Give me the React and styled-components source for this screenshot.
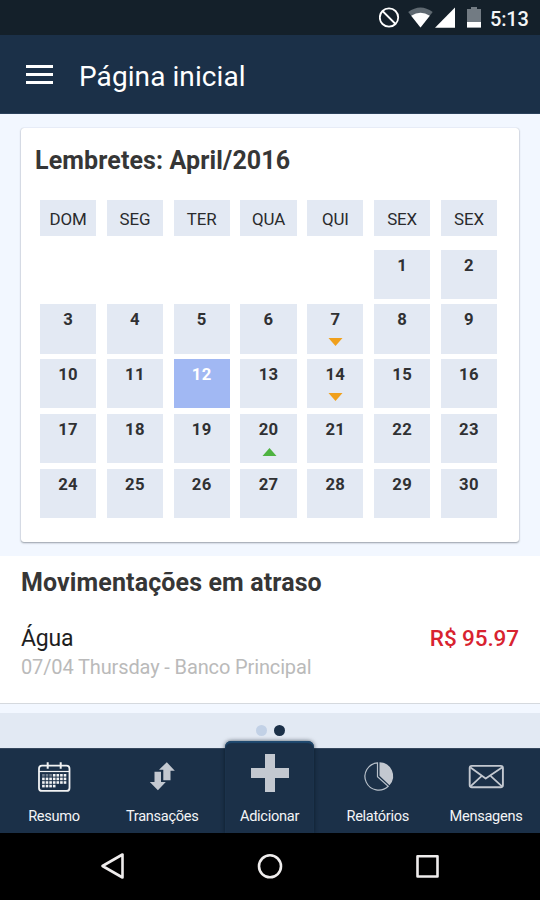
import React from "react";
import styled, { createGlobalStyle } from "styled-components";

const GlobalStyle = createGlobalStyle`
  *, *::before, *::after { box-sizing: border-box; }
  html, body { margin: 0; padding: 0; }
  body { font-family: Roboto, "Liberation Sans", sans-serif; overflow: hidden; }
  svg { display: block; }
`;

const Screen = styled.div`
  width: 540px;
  height: 900px;
  display: flex;
  flex-direction: column;
  overflow: hidden;
  background: #f2f7ff;
`;

const StatusBar = styled.header`
  height: 35px;
  flex: none;
  display: flex;
  align-items: center;
  justify-content: flex-end;
  padding-right: 11px;
  background: #14202a;
`;

const Clock = styled.span`
  width: 39px;
  margin-left: 9px;
  font-size: 20px;
  font-weight: 500;
  line-height: 36px;
  letter-spacing: -0.2px;
  padding-top: 2px;
  color: #f4f5f6;
  white-space: nowrap;
`;

const AppBar = styled.div`
  height: 79px;
  flex: none;
  display: flex;
  align-items: center;
  padding: 2px 26px 0;
  background: #1b3048;
  border-bottom: 1px solid #2b415b;
`;

const MenuButton = styled.button`
  width: 27px;
  height: 19px;
  display: flex;
  flex-direction: column;
  justify-content: space-between;
  padding: 0;
  margin: 0 26px 2px 0;
  border: 0;
  background: none;
`;

const MenuLine = styled.span`
  width: 27px;
  height: 3px;
  background: #fff;
`;

const PageTitle = styled.h1`
  margin: 3px 0 0;
  font-size: 28px;
  font-weight: 400;
  line-height: 36px;
  letter-spacing: 0.08px;
  color: #fff;
`;

const CalendarCard = styled.section`
  flex: none;
  height: 414px;
  margin: 14px 21px 14px;
  padding: 16px 22px 0 14px;
  border-radius: 3px;
  background: #fff;
  box-shadow: 0 1px 2px rgba(30, 40, 50, 0.42), 0 0 1px rgba(40, 60, 100, 0.3);
`;

const SectionTitle = styled.h2`
  margin: 0;
  font-size: 25px;
  font-weight: 700;
  line-height: 34px;
  letter-spacing: 0.12px;
  color: #363636;
  white-space: nowrap;
`;

const WeekHeader = styled.div`
  display: grid;
  grid-template-columns: repeat(7, 56.2px);
  column-gap: 10.63px;
  margin: 22.3px 0 0 5px;
`;

const WeekDay = styled.div`
  height: 35.3px;
  font-size: 16.9px;
  line-height: 39px;
  letter-spacing: -0.1px;
  text-align: center;
  color: #2a2b2d;
  background: #e3e9f3;
`;

const MonthGrid = styled.div`
  display: grid;
  grid-template-columns: repeat(7, 56.2px);
  grid-auto-rows: 49.2px;
  gap: 5.6px 10.63px;
  margin: 14.1px 0 0 5px;
`;

const Day = styled.div`
  grid-column-start: ${(p) => p.$column || "auto"};
  display: flex;
  flex-direction: column;
  align-items: center;
  padding-top: 6px;
  font-size: 16.7px;
  font-weight: 700;
  line-height: 20px;
  letter-spacing: 0.3px;
  color: ${(p) => (p.$today ? "#fff" : "#303133")};
  background: ${(p) => (p.$today ? "#a1b8f3" : "#e3e9f3")};
`;

const Marker = styled.svg`
  width: 15px;
  height: 8px;
  margin: 7.5px 0 0 1px;
  fill: ${(p) => (p.$up ? "#4eb341" : "#f0a01c")};
`;

const Overdue = styled.section`
  flex: none;
  height: 148px;
  padding: 10px 21px 0;
  background: #fff;
  border-bottom: 1px solid #d5d9de;
`;

const Entry = styled.div`
  display: flex;
  justify-content: space-between;
  margin-top: 23px;
`;

const EntryName = styled.div`
  padding-top: 1px;
  font-size: 23px;
  line-height: 30px;
  letter-spacing: -0.2px;
  color: #1e1e1e;
`;

const EntryDetail = styled.div`
  font-size: 20px;
  line-height: 26px;
  letter-spacing: -0.13px;
  color: #bababa;
`;

const Amount = styled.div`
  font-size: 22.5px;
  font-weight: 500;
  line-height: 30px;
  letter-spacing: -0.1px;
  color: #d8232f;
`;

const Pager = styled.div`
  flex: none;
  height: 35px;
  margin-top: 9px;
  display: flex;
  align-items: center;
  justify-content: center;
  gap: 7px;
  background: #e2e9f3;
`;

const Dot = styled.span`
  width: 11px;
  height: 11px;
  border-radius: 50%;
  background: ${(p) => (p.$active ? "#1b3048" : "#c2d1e6")};
`;

const TabBar = styled.nav`
  flex: none;
  height: 85px;
  display: grid;
  grid-template-columns: 108px 108.5px 107px 108.5px 108px;
  background: #1b3048;
  border-top: 1px solid #35475d;
`;

const Tab = styled.a`
  display: flex;
  flex-direction: column;
  align-items: center;
  padding-top: 11px;
  font-size: 14.6px;
  line-height: 20px;
  letter-spacing: -0.3px;
  color: #f3f4f6;
  white-space: nowrap;
`;

const AddTab = styled(Tab)`
  justify-self: center;
  width: 89px;
  height: 92px;
  margin: -8px 0 0 -1px;
  padding-top: 13px;
  border-radius: 6px 6px 0 0;
  background: #1b3048;
  box-shadow: 0 0 4px rgba(5, 15, 28, 0.65), inset 0 2px 1px #204a70;
`;

const TabIcon = styled.svg`
  width: 38px;
  height: 34px;
  margin-bottom: 12px;
  overflow: visible;
`;

const PlusIcon = styled.svg`
  width: 38px;
  height: 38px;
  margin: 0 0 14px 1px;
`;

const SystemBar = styled.footer`
  flex: none;
  height: 67px;
  display: flex;
  align-items: center;
  justify-content: center;
  background: #000;
`;

const weekDays = ["DOM", "SEG", "TER", "QUA", "QUI", "SEX", "SEX"];
const reminders = { 7: "down", 14: "down", 20: "up" };

function StatusIcons() {
  return (
    <svg width="102" height="35" viewBox="379 0 102 35">
      <g fill="none" stroke="#fff" strokeWidth="1.8">
        <circle cx="389" cy="17.5" r="9.2" />
        <path d="M382.5 11 395.5 24" />
      </g>
      <path d="M408.2 12Q420.5 3 432.7 12L420.5 27.5Z" fill="#5f6971" />
      <path d="M411.2 15.8Q420.5 9.5 429.8 15.8L420.5 27.5Z" fill="#fff" />
      <path d="M455 7.5V27.7H435Z" fill="#fff" />
      <path d="M467 9h4V7h6v2h4v18.5h-14Z" fill="#727b83" />
      <path d="M467 22h14v5.5h-14Z" fill="#fff" />
    </svg>
  );
}

function CalendarIcon() {
  const cells = [];
  for (let row = 0; row < 4; row += 1) {
    for (let col = 0; col < 7; col += 1) {
      if (row === 3 && col > 3) continue;
      const hollow = row === 0 && col < 3;
      cells.push(
        <rect
          key={`${row}-${col}`}
          x={7.1 + col * 3.6}
          y={14 + row * 3.6}
          width="2.6"
          height="2.6"
          fill={hollow ? "#6f7c8c" : "#f2f3f4"}
        />
      );
    }
  }
  return (
    <TabIcon viewBox="0 0 38 34">
      <g fill="none" stroke="#f2f3f4">
        <rect x="4" y="5.7" width="30.5" height="25.2" rx="3" strokeWidth="1.8" />
        <path d="M4 11.5h30.5" strokeWidth="1.2" />
        <path d="M12.7 2.2v6.5M25.7 2.2v6.5" strokeWidth="2" />
      </g>
      {cells}
    </TabIcon>
  );
}

function TransferIcon() {
  return (
    <TabIcon viewBox="0 0 38 34">
      <g fill="#c3c8d0">
        <path d="M23.8 2.2 31.8 10.8H27.5V20.3H20.3V9.8H16Z" />
        <path d="M11.5 11.8H18V22H22.8L14.9 30.3L6.8 22H11.5Z" />
      </g>
    </TabIcon>
  );
}

function ChartIcon() {
  return (
    <TabIcon viewBox="0 0 38 34">
      <path
        d="M18.5 2.8A13.7 13.7 0 1 0 29.2 26.3L18.5 16.8Z"
        fill="none"
        stroke="#b8c0ca"
        strokeWidth="1.2"
      />
      <path d="M20.5 2.2A13.8 13.8 0 0 1 30.5 25.3L20.5 15.8Z" fill="#c3c8d0" />
    </TabIcon>
  );
}

function EnvelopeIcon() {
  return (
    <TabIcon viewBox="0 0 38 34">
      <g fill="none" stroke="#c3c8d0" strokeLinejoin="round">
        <rect x="2.7" y="5.9" width="33.2" height="21.4" rx="2.2" strokeWidth="1.9" />
        <path d="M3.5 7.5 18.7 18.6 35 7.5M3.5 26.3 14.5 16.2M35 26.3 23.8 16.2" strokeWidth="1.8" />
      </g>
    </TabIcon>
  );
}

export default function App() {
  return (
    <Screen>
      <GlobalStyle />
      <StatusBar>
        <StatusIcons />
        <Clock>5:13</Clock>
      </StatusBar>
      <AppBar>
        <MenuButton aria-label="Menu">
          <MenuLine />
          <MenuLine />
          <MenuLine />
        </MenuButton>
        <PageTitle>Página inicial</PageTitle>
      </AppBar>

      <CalendarCard>
        <SectionTitle>Lembretes: April/2016</SectionTitle>
        <WeekHeader>
          {weekDays.map((day, i) => (
            <WeekDay key={i}>{day}</WeekDay>
          ))}
        </WeekHeader>
        <MonthGrid>
          {Array.from({ length: 30 }, (_, i) => i + 1).map((day) => (
            <Day key={day} $column={day === 1 ? 6 : undefined} $today={day === 12}>
              {day}
              {reminders[day] && (
                <Marker viewBox="0 0 15 8" $up={reminders[day] === "up"}>
                  <path d={reminders[day] === "up" ? "M.5 8 7.5 0 14.5 8Z" : "M.5 0h14L7.5 8Z"} />
                </Marker>
              )}
            </Day>
          ))}
        </MonthGrid>
      </CalendarCard>

      <Overdue>
        <SectionTitle>Movimentações em atraso</SectionTitle>
        <Entry>
          <div>
            <EntryName>Água</EntryName>
            <EntryDetail>07/04 Thursday - Banco Principal</EntryDetail>
          </div>
          <Amount>R$ 95.97</Amount>
        </Entry>
      </Overdue>

      <Pager>
        <Dot />
        <Dot $active />
      </Pager>
      <TabBar>
        <Tab>
          <CalendarIcon />
          Resumo
        </Tab>
        <Tab>
          <TransferIcon />
          Transações
        </Tab>
        <AddTab>
          <PlusIcon viewBox="0 0 38 38">
            <path d="M14 0h10v14h14v10H24v14H14V24H0V14h14Z" fill="#c3c8d0" />
          </PlusIcon>
          Adicionar
        </AddTab>
        <Tab>
          <ChartIcon />
          Relatórios
        </Tab>
        <Tab>
          <EnvelopeIcon />
          Mensagens
        </Tab>
      </TabBar>
      <SystemBar>
        <svg width="540" height="67" viewBox="0 833 540 67" fill="none" stroke="#efeded" strokeWidth="2.6" strokeLinejoin="round">
          <path d="M122.5 854.5V877.5L102.5 866Z" />
          <circle cx="270" cy="866.3" r="11" />
          <rect x="417.5" y="856.3" width="20" height="20.2" />
        </svg>
      </SystemBar>
    </Screen>
  );
}
